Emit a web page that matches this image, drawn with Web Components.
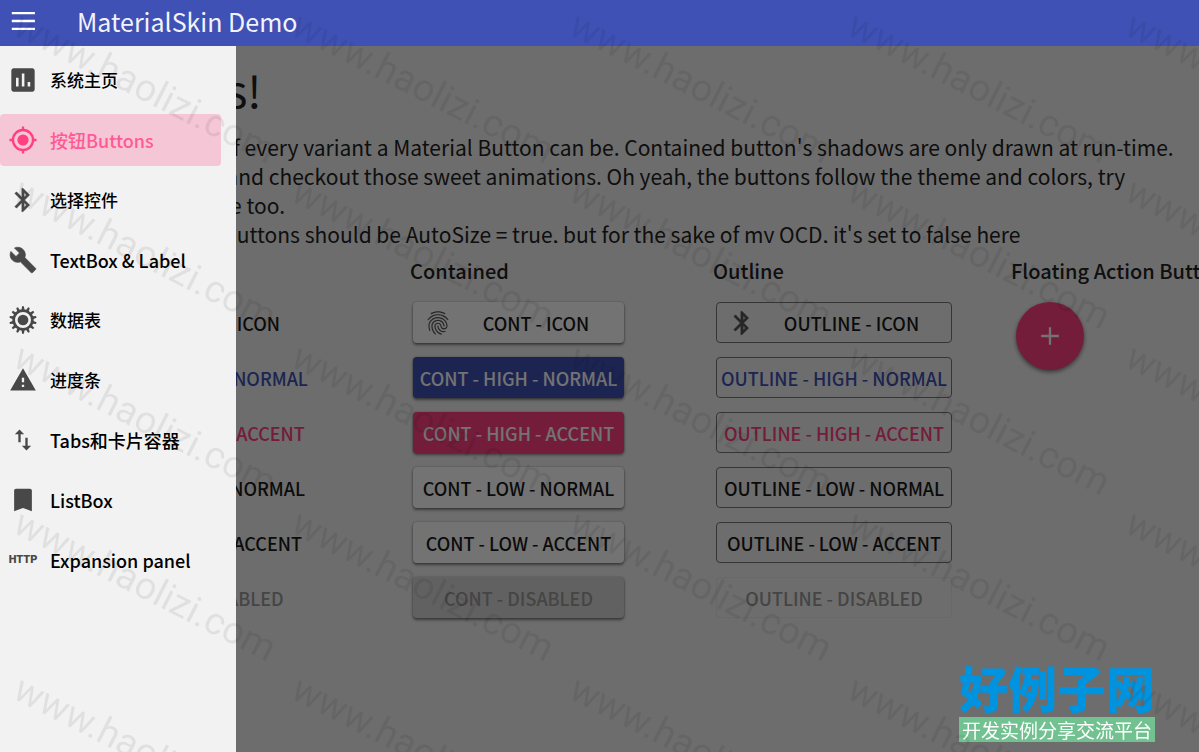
<!DOCTYPE html>
<html lang="zh-CN">
<head>
<meta charset="utf-8">
<title>MaterialSkin Demo</title>
<style>
body{
    margin:0;
    font-family:"Noto Sans CJK SC", sans-serif;
    background-color:#f2f2f2;
}
</style>
</head>
<body>
<skin-app>
    <skin-header slot="header" title="MaterialSkin Demo"></skin-header>
    <skin-drawer slot="drawer">
        <skin-menu-item icon="chart">系统主页</skin-menu-item>
        <skin-menu-item icon="target" latin active>按钮Buttons</skin-menu-item>
        <skin-menu-item icon="bluetooth">选择控件</skin-menu-item>
        <skin-menu-item icon="wrench" latin>TextBox &amp; Label</skin-menu-item>
        <skin-menu-item icon="gear">数据表</skin-menu-item>
        <skin-menu-item icon="warning">进度条</skin-menu-item>
        <skin-menu-item icon="arrows" latin>Tabs和卡片容器</skin-menu-item>
        <skin-menu-item icon="bookmark" latin>ListBox</skin-menu-item>
        <skin-menu-item icon="http" latin>Expansion panel</skin-menu-item>
    </skin-drawer>
    <skin-page slot="page" heading="Buttons!">
        <div slot="intro">These are examples of every variant a Material Button can be. Contained button's shadows are only drawn at run-time.</div>
        <div slot="intro">Click on any of them and checkout those sweet animations. Oh yeah, the buttons follow the theme and colors, try</div>
        <div slot="intro">in changing the theme too.</div>
        <div slot="intro">PS Most of the other buttons should be AutoSize = true, but for the sake of my OCD, it's set to false here</div>
        <skin-column label="Text">
            <skin-button type="text" icon="blank">TEXT - ICON</skin-button>
            <skin-button type="text" tone="primary">TEXT - HIGH - NORMAL</skin-button>
            <skin-button type="text" tone="accent">TEXT - HIGH - ACCENT</skin-button>
            <skin-button type="text">TEXT - LOW - NORMAL</skin-button>
            <skin-button type="text">TEXT - LOW - ACCENT</skin-button>
            <skin-button type="text" disabled>TEXT - DISABLED</skin-button>
        </skin-column>
        <skin-column label="Contained">
            <skin-button type="contained" icon="fingerprint">CONT - ICON</skin-button>
            <skin-button type="contained" tone="primary">CONT - HIGH - NORMAL</skin-button>
            <skin-button type="contained" tone="accent">CONT - HIGH - ACCENT</skin-button>
            <skin-button type="contained">CONT - LOW - NORMAL</skin-button>
            <skin-button type="contained">CONT - LOW - ACCENT</skin-button>
            <skin-button type="contained" disabled>CONT - DISABLED</skin-button>
        </skin-column>
        <skin-column label="Outline">
            <skin-button type="outline" icon="bluetooth">OUTLINE - ICON</skin-button>
            <skin-button type="outline" tone="primary">OUTLINE - HIGH - NORMAL</skin-button>
            <skin-button type="outline" tone="accent">OUTLINE - HIGH - ACCENT</skin-button>
            <skin-button type="outline">OUTLINE - LOW - NORMAL</skin-button>
            <skin-button type="outline">OUTLINE - LOW - ACCENT</skin-button>
            <skin-button type="outline" disabled>OUTLINE - DISABLED</skin-button>
        </skin-column>
        <skin-column label="Floating Action Button">
            <skin-fab></skin-fab>
        </skin-column>
    </skin-page>
</skin-app>
<site-badge name="好例子网" slogan="开发实例分享交流平台"></site-badge>
<site-watermark text="www.haolizi.com"></site-watermark>

<script>
// teeth of the gear, 14 round the ring
var teeth = "";
for(var i = 0; i < 14; i++){
    teeth += `<path d="M10.7 3.6L11.2.3h1.6L13.3 3.6z" transform="rotate(${i * 360 / 14} 12 12)"/>`;
}

var ICONS = {
    blank: "",
    menu: `<path d="M2.4 4.2h19.8v2H2.4zM2.4 11h19.8v2H2.4zM2.4 17.8h19.8v2H2.4z"/>`,
    chart: `<path d="M20 2H4c-1.1 0-2 .9-2 2v16c0 1.1.9 2 2 2h16c1.1 0 2-.9 2-2V4c0-1.1-.9-2-2-2zM8.2 17.6H6V10h2.2zm5 0H11V6.4h2.2zm5 0H16v-3.8h2.2z"/>`,
    target: `<circle cx="12" cy="12" r="8.6" fill="none" stroke="currentColor" stroke-width="2"/><circle cx="12" cy="12" r="4.8"/><path d="M11 .4h2v3.4h-2zM11 20.2h2v3.4h-2zM.4 11h3.4v2H.4zM20.2 11h3.4v2h-3.4z"/>`,
    bluetooth: `<path d="M17.71 7.71L12 2h-1v7.59L6.41 5 5 6.41 10.59 12 5 17.59 6.41 19 11 14.41V22h1l5.71-5.71-4.3-4.29 4.3-4.29zM13 5.83l1.88 1.88L13 9.59V5.83zm1.88 10.46L13 18.17v-3.76l1.88 1.88z" stroke="currentColor" stroke-width=".4"/>`,
    wrench: `<path d="M22.7 19l-9.1-9.1c.9-2.3.4-5-1.5-6.9-2-2-5-2.4-7.4-1.3L9 6 6 9 1.6 4.7C.4 7.1.9 10.1 2.9 12.1c1.9 1.9 4.6 2.4 6.9 1.5l9.1 9.1c.4.4 1 .4 1.4 0l2.3-2.3c.5-.4.5-1.1.1-1.4z" stroke="currentColor" stroke-width=".6" stroke-linejoin="round"/>`,
    gear: `<circle cx="12" cy="12" r="8" fill="none" stroke="currentColor" stroke-width="2.3"/><circle cx="12" cy="12" r="4.6"/>${teeth}`,
    warning: `<path d="M1 21h22L12 2 1 21zm12-3h-2v-2h2v2zm0-4h-2v-4h2v4z"/>`,
    arrows: `<path d="M9 3L5 6.99h3V14h2V6.99h3L9 3zm7 14.01V10h-2v7.01h-3L15 21l4-3.99h-3z"/>`,
    bookmark: `<path d="M18 2.3H6c-.9 0-1.6.7-1.6 1.6v17.7l7.6-2.8 7.6 2.8V3.9c0-.9-.7-1.6-1.6-1.6z"/>`,
    plus: `<path d="M19.6 13h-6.6v6.6h-2V13H4.4v-2H11V4.400h2V11h6.600z"/>`,
    fingerprint: `<path d="M17.81 4.47c-.08 0-.16-.02-.23-.06C15.66 3.42 14 3 12.01 3c-1.98 0-3.86.47-5.57 1.41-.24.13-.54.04-.68-.2-.13-.24-.04-.55.2-.68C7.82 2.52 9.86 2 12.01 2c2.13 0 3.99.47 6.03 1.52.25.13.34.43.21.67-.09.18-.26.28-.44.28zM3.5 9.72c-.1 0-.2-.03-.29-.09-.23-.16-.28-.47-.12-.7.99-1.4 2.25-2.5 3.75-3.27C9.98 4.04 14 4.03 17.15 5.65c1.5.77 2.76 1.86 3.75 3.25.16.22.11.54-.12.7-.23.16-.54.11-.7-.12-.9-1.26-2.04-2.25-3.39-2.94-2.87-1.47-6.54-1.47-9.4.01-1.36.7-2.5 1.7-3.4 2.96-.08.14-.23.21-.39.21zm6.25 12.07c-.13 0-.26-.05-.35-.15-.87-.87-1.34-1.43-2.01-2.64-.69-1.23-1.05-2.73-1.05-4.34 0-2.97 2.54-5.39 5.66-5.39s5.66 2.42 5.66 5.39c0 .28-.22.5-.5.5s-.5-.22-.5-.5c0-2.42-2.09-4.39-4.66-4.39-2.57 0-4.66 1.97-4.66 4.39 0 1.44.32 2.77.93 3.85.64 1.15 1.08 1.64 1.85 2.42.19.2.19.51 0 .71-.11.1-.24.15-.37.15zm7.17-1.85c-1.19 0-2.24-.3-3.1-.89-1.49-1.01-2.38-2.65-2.38-4.39 0-.28.22-.5.5-.5s.5.22.5.5c0 1.41.72 2.74 1.94 3.56.71.48 1.54.71 2.54.71.24 0 .64-.03 1.04-.1.27-.05.53.13.58.41.05.27-.13.53-.41.58-.57.11-1.07.12-1.21.12zM14.91 22c-.04 0-.09-.01-.13-.02-1.59-.44-2.63-1.03-3.72-2.1-1.4-1.39-2.17-3.24-2.17-5.22 0-1.62 1.38-2.94 3.08-2.94 1.7 0 3.08 1.32 3.08 2.94 0 1.07.93 1.94 2.08 1.94s2.08-.87 2.08-1.94c0-3.77-3.25-6.83-7.25-6.83-2.84 0-5.44 1.58-6.61 4.03-.39.81-.59 1.76-.59 2.8 0 .78.07 2.01.67 3.61.1.26-.03.55-.29.64-.26.1-.55-.04-.64-.29-.49-1.31-.73-2.61-.73-3.96 0-1.2.23-2.29.68-3.24 1.33-2.79 4.28-4.6 7.51-4.6 4.55 0 8.25 3.51 8.25 7.83 0 1.62-1.38 2.94-3.08 2.94s-3.08-1.32-3.08-2.94c0-1.07-.93-1.94-2.08-1.94s-2.08.87-2.08 1.94c0 1.71.66 3.31 1.87 4.51.95.94 1.86 1.46 3.27 1.85.27.07.42.35.35.61-.05.23-.26.38-.47.38z"/>`
};

class SkinIcon extends HTMLElement{
    constructor(){
        super();
        this.shadow = this.attachShadow({mode: 'open'});
    }

    connectedCallback(){
        var name = this.getAttribute('name');
        // the http icon is a word, so it stays text
        var body = name == 'http'
            ? `<span>HTTP</span>`
            : `<svg viewBox="0 0 24 24" fill="currentColor" aria-hidden="true">${ICONS[name] || ""}</svg>`;
        this.shadow.innerHTML = `
        <style>
        :host{
            display:flex;
            flex:none;
            align-items:center;
            justify-content:center;
            width:28px;
            height:28px;
        }
        svg{
            width:100%;
            height:100%;
        }
        span{
            font:900 11px/12px Roboto, sans-serif;
        }
        </style>
        ${body}`;
    }
}

class SkinApp extends HTMLElement{
    constructor(){
        super();
        this.shadow = this.attachShadow({mode: 'open'});
    }

    connectedCallback(){
        this.shadow.innerHTML = `
        <style>
        :host{
            display:flex;
            flex-direction:column;
            height:100vh;
            overflow:hidden;
        }
        /* page, scrim and drawer share one cell */
        .body{
            display:grid;
            grid-template:minmax(0, 1fr) / minmax(0, 1fr);
            flex:1;
            min-height:0;
        }
        .scrim, ::slotted([slot=page]), ::slotted([slot=drawer]){
            grid-area:1 / 1;
        }
        .scrim{
            background-color:rgba(0,0,0,.55);
            z-index:1;
        }
        ::slotted([slot=drawer]){
            z-index:2;
            justify-self:start;
        }
        </style>
        <slot name="header"></slot>
        <div class="body">
            <slot name="page"></slot>
            <div class="scrim"></div>
            <slot name="drawer"></slot>
        </div>`;
    }
}

class SkinHeader extends HTMLElement{
    constructor(){
        super();
        this.shadow = this.attachShadow({mode: 'open'});
    }

    connectedCallback(){
        this.shadow.innerHTML = `
        <style>
        :host{
            display:block;
        }
        header{
            display:flex;
            align-items:center;
            gap:40px;
            height:46px;
            box-sizing:border-box;
            padding:0 9px 4px;
            background-color:#3f51b5;
            color:#fff;
        }
        button{
            display:flex;
            padding:0;
            border:0;
            background:none;
            color:inherit;
        }
        h1{
            margin:0;
            font-size:25px;
            font-weight:400;
            line-height:32px;
            color:#f2f3fa;
        }
        </style>
        <header>
            <button aria-label="Menu"><skin-icon name="menu"></skin-icon></button>
            <h1>${this.getAttribute('title')}</h1>
        </header>`;
    }
}

class SkinDrawer extends HTMLElement{
    constructor(){
        super();
        this.shadow = this.attachShadow({mode: 'open'});
    }

    connectedCallback(){
        this.shadow.innerHTML = `
        <style>
        :host{
            display:block;
            width:236px;
            background-color:#f2f2f2;
        }
        nav{
            display:flex;
            flex-direction:column;
            gap:8px;
            padding:8px 15px 8px 0;
        }
        </style>
        <nav><slot></slot></nav>`;
    }
}

class SkinMenuItem extends HTMLElement{
    constructor(){
        super();
        this.shadow = this.attachShadow({mode: 'open'});
    }

    connectedCallback(){
        this.shadow.innerHTML = `
        <style>
        :host{
            display:block;
            font-size:17px;
        }
        :host([latin]){
            font-size:18px;
        }
        a{
            display:flex;
            align-items:center;
            gap:13px;
            height:52px;
            padding-left:9px;
            border-radius:4px;
            color:#000;
            font-weight:500;
            line-height:24px;
            text-decoration:none;
            white-space:nowrap;
        }
        skin-icon{
            color:#484848;
        }
        :host([active]) a{
            background-color:#f5c6d6;
            color:#ff5a94;
        }
        :host([active]) skin-icon{
            color:#ff4081;
        }
        </style>
        <a href="#"><skin-icon name="${this.getAttribute('icon')}"></skin-icon><slot></slot></a>`;
    }
}

class SkinPage extends HTMLElement{
    constructor(){
        super();
        this.shadow = this.attachShadow({mode: 'open'});
    }

    connectedCallback(){
        this.shadow.innerHTML = `
        <style>
        :host{
            display:block;
            overflow:hidden;
            color:#222;
        }
        h2{
            margin:0 0 0 86px;
            padding:19px 0 20px;
            font-size:44px;
            font-weight:400;
            line-height:48px;
        }
        .intro{
            height:110px;
            padding-left:23px;
            overflow:hidden;
            font-size:21px;
            line-height:29px;
            white-space:nowrap;
        }
        .columns{
            display:grid;
            grid-template-columns:303px 303px 298px max-content;
            padding:12px 0 0 107px;
        }
        </style>
        <h2>${this.getAttribute('heading')}</h2>
        <div class="intro"><slot name="intro"></slot></div>
        <div class="columns"><slot></slot></div>`;
    }
}

class SkinColumn extends HTMLElement{
    constructor(){
        super();
        this.shadow = this.attachShadow({mode: 'open'});
    }

    connectedCallback(){
        this.shadow.innerHTML = `
        <style>
        :host{
            display:block;
        }
        h3{
            margin:0 0 15px;
            font-size:20px;
            font-weight:500;
            line-height:32px;
            white-space:nowrap;
        }
        .items{
            display:flex;
            flex-direction:column;
            align-items:flex-start;
            gap:14px;
            padding-left:3px;
        }
        </style>
        <h3>${this.getAttribute('label')}</h3>
        <div class="items"><slot></slot></div>`;
    }
}

class SkinButton extends HTMLElement{
    constructor(){
        super();
        this.shadow = this.attachShadow({mode: 'open'});
    }

    connectedCallback(){
        var icon = this.getAttribute('icon');
        this.shadow.innerHTML = `
        <style>
        :host{
            display:block;
            width:204px;
            --tone:#1a1a1a;
        }
        :host([type=contained]){
            width:211px;
        }
        :host([type=outline]){
            width:236px;
        }
        :host([tone=primary]){
            --tone:#3f51b5;
        }
        :host([tone=accent]){
            --tone:#ff4081;
        }
        button{
            display:flex;
            align-items:center;
            width:100%;
            height:41px;
            padding:0;
            border:0;
            border-radius:4px;
            background:none;
            color:var(--tone);
            font-family:inherit;
            font-size:18px;
            font-weight:500;
            line-height:24px;
            white-space:nowrap;
        }
        skin-icon{
            margin-left:11px;
            margin-right:-4px;
            color:#555;
        }
        .label{
            flex:1;
            text-align:center;
        }
        :host([type=contained]) button{
            background-color:#fff;
            box-shadow:0 2px 3px rgba(0,0,0,.45), 0 0 2px rgba(0,0,0,.3);
        }
        :host([type=contained][tone]) button{
            background-color:var(--tone);
            color:#fff;
        }
        :host([type=outline]) button{
            border:1px solid #777;
        }
        :host([disabled]) button{
            color:#999;
        }
        :host([type=contained][disabled]) button{
            background-color:#d8d8d8;
        }
        :host([type=outline][disabled]) button{
            border-color:#e6e6e6;
        }
        </style>
        <button ${this.hasAttribute('disabled') ? 'disabled' : ''}>
            ${icon ? `<skin-icon name="${icon}"></skin-icon>` : ''}
            <span class="label"><slot></slot></span>
        </button>`;
    }
}

class SkinFab extends HTMLElement{
    constructor(){
        super();
        this.shadow = this.attachShadow({mode: 'open'});
    }

    connectedCallback(){
        this.shadow.innerHTML = `
        <style>
        :host{
            display:block;
            padding-left:2px;
        }
        button{
            display:flex;
            align-items:center;
            justify-content:center;
            width:68px;
            height:68px;
            padding:0;
            border:0;
            border-radius:50%;
            background-color:#ff4081;
            color:#fff;
            box-shadow:0 2px 4px rgba(0,0,0,.5);
        }
        </style>
        <button aria-label="Add"><skin-icon name="plus"></skin-icon></button>`;
    }
}

class SiteBadge extends HTMLElement{
    constructor(){
        super();
        this.shadow = this.attachShadow({mode: 'open'});
    }

    connectedCallback(){
        this.shadow.innerHTML = `
        <style>
        :host{
            position:fixed;
            right:44px;
            bottom:10px;
            z-index:5;
            display:block;
            text-align:center;
            white-space:nowrap;
        }
        .name{
            padding-bottom:8px;
            color:#0093e0;
            font-size:49px;
            font-weight:900;
            line-height:44px;
        }
        .slogan{
            padding:0 3px;
            background-color:#71c290;
            color:#fff;
            font-size:19px;
            line-height:25px;
        }
        </style>
        <div class="name">${this.getAttribute('name')}</div>
        <div class="slogan">${this.getAttribute('slogan')}</div>`;
    }
}

class SiteWatermark extends HTMLElement{
    constructor(){
        super();
        this.shadow = this.attachShadow({mode: 'open'});
    }

    connectedCallback(){
        var text = this.getAttribute('text');
        var marks = "";
        for(var i = 0; i < 25; i++){
            marks += `<span>${text}</span>`;
        }
        this.shadow.innerHTML = `
        <style>
        :host{
            position:fixed;
            inset:0;
            z-index:6;
            display:grid;
            grid-template-columns:repeat(5, 278px);
            grid-auto-rows:166px;
            padding:4px 0 0 26px;
            overflow:hidden;
            pointer-events:none;
            color:rgba(0,0,0,.07);
            font:38px/40px Roboto, sans-serif;
        }
        span{
            white-space:nowrap;
            transform:rotate(27deg);
            transform-origin:0 0;
        }
        </style>
        ${marks}`;
    }
}

window.customElements.define('skin-icon', SkinIcon);
window.customElements.define('skin-app', SkinApp);
window.customElements.define('skin-header', SkinHeader);
window.customElements.define('skin-drawer', SkinDrawer);
window.customElements.define('skin-menu-item', SkinMenuItem);
window.customElements.define('skin-page', SkinPage);
window.customElements.define('skin-column', SkinColumn);
window.customElements.define('skin-button', SkinButton);
window.customElements.define('skin-fab', SkinFab);
window.customElements.define('site-badge', SiteBadge);
window.customElements.define('site-watermark', SiteWatermark);
</script>
</body>
</html>
